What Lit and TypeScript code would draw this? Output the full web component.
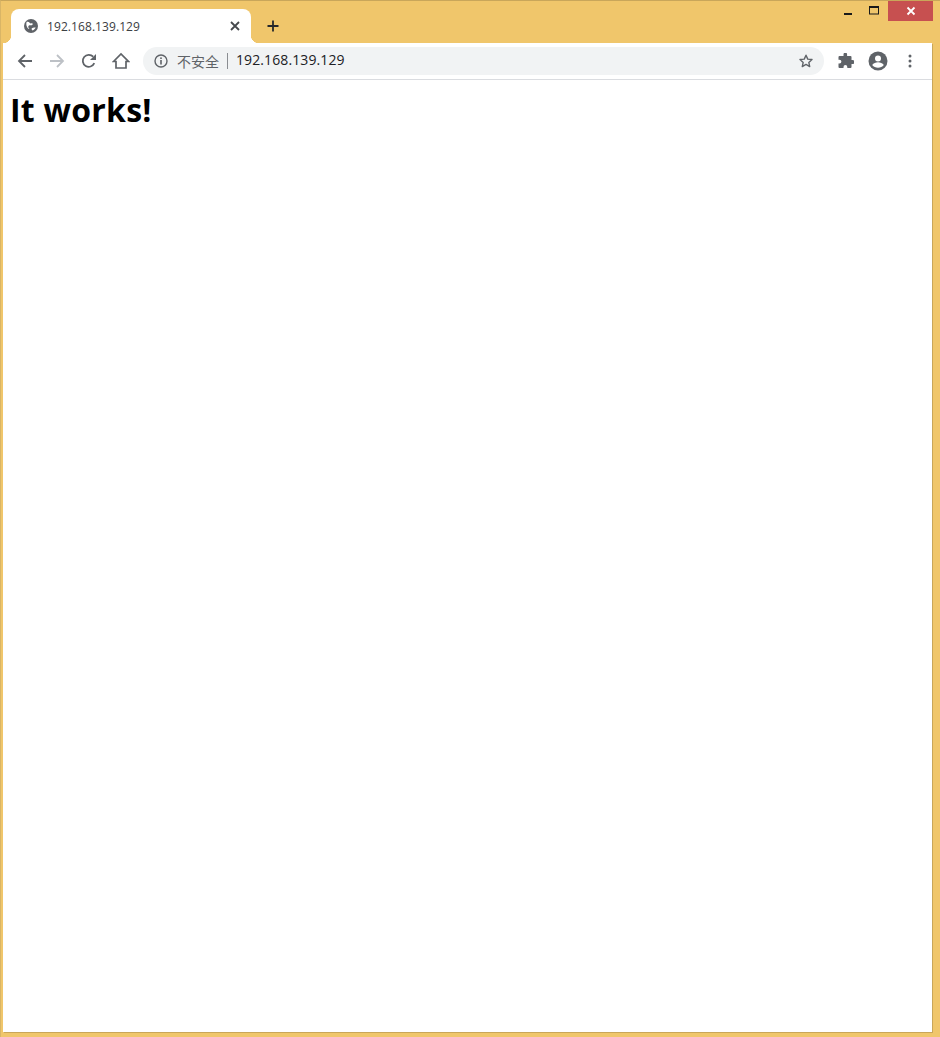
import { LitElement, html, css } from "lit";
import { customElement } from "lit/decorators.js";

@customElement("app-root")
export class AppRoot extends LitElement {
  static styles = css`
    :host { display: block; }
    .window {
      box-sizing: border-box; width: 940px; height: 1037px;
      background: #f0c66b; border-top: 1px solid #c9a65a; border-left: 1px solid #d9b566;
      display: flex; flex-direction: column;
      font-family: "Noto Sans", "Open Sans", sans-serif;
    }
    .strip { height: 42px; flex: none; display: flex; align-items: flex-end; padding-left: 10px; position: relative; }
    .tab {
      width: 240px; height: 34px; background: #fff; border-radius: 8px 8px 0 0; position: relative;
      display: flex; align-items: center; box-sizing: border-box; padding: 0 11px 0 13px;
    }
    .tab::before, .tab::after {
      content: ""; position: absolute; bottom: 0; width: 8px; height: 8px;
    }
    .tab::before { left: -8px; background: radial-gradient(circle at 0 0, transparent 8px, #fff 8.5px); }
    .tab::after { right: -8px; background: radial-gradient(circle at 100% 0, transparent 8px, #fff 8.5px); }
    .tab-title { font: 12px "Open Sans", "Liberation Sans", sans-serif; color: #3c4043; margin-left: 9px; flex: 1; letter-spacing: 0.08px; }
    .plus { margin-left: 14px; align-self: center; margin-top: 8px; display: flex; }
    .controls { position: absolute; top: 0; right: 7px; display: flex; align-items: flex-start; }
    .ctl { width: 27px; height: 20px; display: flex; align-items: center; justify-content: center; }
    .ctl.close { width: 45px; background: #c75050; }
    .body {
      flex: 1; min-height: 0; margin: 0 8px 5px 2px; background: #fff; display: flex; flex-direction: column;
      box-shadow: 1px 1px 0 #c9a65a;
    }
    .toolbar {
      height: 36px; flex: none; border-bottom: 1px solid #dadce0; display: flex; align-items: center;
      padding: 0 0 0 6px; box-sizing: content-box;
    }
    .nav { width: 32px; height: 32px; display: flex; align-items: center; justify-content: center; flex: none; }
    .omni {
      flex: none; width: 681px; height: 28px; margin-left: 6px; background: #f1f3f4; border-radius: 14px;
      display: flex; align-items: center; padding: 0 10px 0 11px; box-sizing: border-box;
    }
    .insecure { font: 14px/20px "Noto Sans CJK SC", sans-serif; color: #5f6368; margin-left: 9px; padding-bottom: 1px; }
    .sep { width: 1px; height: 16px; background: #8a8d91; margin: 0 8px; }
    .url { font: 14px/20px "Open Sans", "Liberation Sans", sans-serif; color: #202124; flex: 1; letter-spacing: 0.1px; padding-bottom: 2px; }
    .tools { display: flex; margin-left: 6px; }
    .page { flex: 1; padding: 11px 7px; }
    h1 { margin: 0; font: 700 32px/37px "Open Sans", "Noto Sans", sans-serif; color: #000; letter-spacing: 0.25px; }
  `;

  render() {
    return html`<div class="window">
      <div class="strip">
        <div class="tab">
          <svg width="14" height="14" viewBox="0 0 16 16"><circle cx="8" cy="8" r="8" fill="#5f6368"/><path d="M3 3.200c1.600-.3 2.800 0 3.400 1 .5.900 1.400 1 2.200.7.800-.3 1.500.3 1.300 1.100-.2 1-1.200 1.300-2.200 1.200-1.400-.2-2.600.3-2.800 1.400-.2 1 .5 1.800 1.300 2.400L4.800 11C3 9.500 2 6 3 3.200ZM9 10.500c1-.9 2.300-1 4.300-.8-.6 1.400-1.900 2.700-3.500 3.300-.8-.6-1.500-1.600-.8-2.500Z" fill="#fff"/></svg>
          <span class="tab-title">192.168.139.129</span>
          <svg width="10" height="10" viewBox="0 0 10 10"><path d="M1 1l8 8M9 1L1 9" stroke="#45484c" stroke-width="1.800" fill="none"/></svg>
        </div>
        <div class="plus"><svg width="16" height="16" viewBox="0 0 16 16"><path d="M8 2.500v11M2.500 8h11" stroke="#26282b" stroke-width="1.800" fill="none"/></svg></div>
        <div class="controls">
          <div class="ctl"><svg width="10" height="10" viewBox="0 0 10 10"><rect x="1" y="7" width="8" height="2" fill="#1a1a1a"/></svg></div>
          <div class="ctl"><svg width="11" height="10" viewBox="0 0 11 10"><rect x=".5" y=".5" width="9" height="7.500" fill="none" stroke="#1a1a1a"/><rect x="0" y="0" width="10" height="2" fill="#1a1a1a"/></svg></div>
          <div class="ctl close"><svg width="10" height="10" viewBox="0 0 10 10"><path d="M1.500 1.500l7 7M8.500 1.500l-7 7" stroke="#fff" stroke-width="1.800" fill="none"/></svg></div>
        </div>
      </div>
      <div class="body">
        <div class="toolbar">
          <div class="nav"><svg width="16" height="16" viewBox="0 0 16 16"><path d="M15 8H2M8 2 2 8l6 6" stroke="#5f6368" stroke-width="1.800" fill="none"/></svg></div>
          <div class="nav"><svg width="16" height="16" viewBox="0 0 16 16"><path d="M1 8h13M8 2l6 6-6 6" stroke="#bdc1c6" stroke-width="1.800" fill="none"/></svg></div>
          <div class="nav"><svg width="16" height="16" viewBox="0 0 16 16"><path d="M13.300 10.200A6 6 0 1 1 12.200 3.700" stroke="#5f6368" stroke-width="1.800" fill="none"/><path d="M15 1v6H9z" fill="#5f6368"/></svg></div>
          <div class="nav"><svg width="18" height="18" viewBox="0 0 18 18"><path d="M1.500 9.500 9 2l7.500 7.500H14V16H4V9.500Z" stroke="#5f6368" stroke-width="1.700" fill="none" stroke-linejoin="miter"/></svg></div>
          <div class="omni">
            <svg width="14" height="14" viewBox="0 0 14 14"><circle cx="7" cy="7" r="6" stroke="#5f6368" stroke-width="1.400" fill="none"/><rect x="6.200" y="6" width="1.600" height="4.500" fill="#5f6368"/><rect x="6.200" y="3.400" width="1.600" height="1.600" fill="#5f6368"/></svg>
            <span class="insecure">不安全</span>
            <span class="sep"></span>
            <span class="url">192.168.139.129</span>
            <svg width="16" height="16" viewBox="0 0 16 16"><path d="M8 2.200l1.750 3.900 4.250.45-3.170 2.850.88 4.200L8 11.450 4.290 13.600l.88-4.200L2 6.550l4.250-.45Z" stroke="#5f6368" stroke-width="1.400" fill="none" stroke-linejoin="round"/></svg>
          </div>
          <div class="tools">
            <div class="nav"><svg width="16" height="16" viewBox="0.500 0 16 16"><path d="M6 1.500a1.800 1.800 0 0 1 3.600 0V3H13a1 1 0 0 1 1 1v3h1a2 2 0 0 1 0 4h-1v3a1 1 0 0 1-1 1H9.800v-1a1.900 1.900 0 0 0-3.800 0v1H2a1 1 0 0 1-1-1v-3.500h1a1.900 1.900 0 0 0 0-3.800H1V4a1 1 0 0 1 1-1h4Z" fill="#5f6368"/></svg></div>
            <div class="nav"><svg width="20" height="20" viewBox="0 0 20 20"><circle cx="10" cy="10" r="9.500" fill="#5f6368"/><circle cx="10" cy="7.500" r="3" fill="#fff"/><path d="M4.200 14c1.300-1.800 3.500-2.700 5.800-2.700s4.500.9 5.800 2.700c-1.400 1.700-3.500 2.700-5.800 2.700S5.600 15.700 4.200 14Z" fill="#fff"/></svg></div>
            <div class="nav"><svg width="4" height="14" viewBox="0 0 4 14"><circle cx="2" cy="2" r="1.500" fill="#5f6368"/><circle cx="2" cy="7" r="1.500" fill="#5f6368"/><circle cx="2" cy="12" r="1.500" fill="#5f6368"/></svg></div>
          </div>
        </div>
        <div class="page"><h1>It works!</h1></div>
      </div>
    </div>`;
  }
}
